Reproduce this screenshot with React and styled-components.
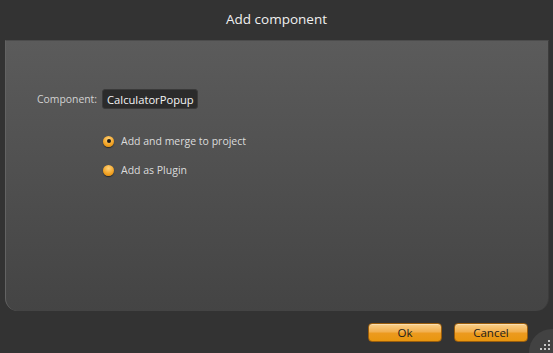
import React, { useState } from "react";
import styled, { createGlobalStyle } from "styled-components";

const GlobalStyle = createGlobalStyle`
  html, body {
    margin: 0;
    padding: 0;
    background: #333333;
  }
  body {
    font-family: 'Open Sans', 'Noto Sans', sans-serif;
  }
`;

const Window = styled.div`
  position: relative;
  width: 553px;
  height: 353px;
  display: flex;
  flex-direction: column;
  background: #333333;
  overflow: hidden;
`;

const TitleBar = styled.div`
  height: 40px;
  display: flex;
  align-items: center;
  justify-content: center;
  color: #f0f0f0;
  font-size: 13.5px;
  padding-bottom: 3px;
  box-sizing: border-box;
`;

const Panel = styled.div`
  margin: 0 4px 0 5px;
  height: 271px;
  box-sizing: border-box;
  background: linear-gradient(#5b5b5b, #444444);
  border-top: 1px solid #4c4c4c;
  border-left: 1px solid #636363;
  border-right: 1px solid #3c3c3c;
  border-radius: 0 0 13px 13px;
  padding: 48px 0 0 31px;
  display: flex;
  flex-direction: column;
`;

const FieldRow = styled.div`
  display: flex;
  align-items: center;
  gap: 5px;
`;

const Label = styled.span`
  color: #d2d2d2;
  font-size: 10.4px;
`;

const NameBox = styled.div`
  height: 20px;
  box-sizing: border-box;
  padding: 0 3px 0 4px;
  display: flex;
  align-items: center;
  background: #2b2b2b;
  border: 1px solid #3a3a3a;
  border-radius: 3px;
  color: #f4f4f4;
  font-size: 11.2px;
`;

const Options = styled.div`
  display: flex;
  flex-direction: column;
  gap: 13px;
  margin: 24px 0 0 66px;
`;

const Option = styled.label`
  display: flex;
  align-items: center;
  gap: 7px;
  color: #dcdcdc;
  font-size: 10.5px;
  height: 16px;
  cursor: pointer;
`;

const Radio = styled.span`
  width: 11px;
  height: 11px;
  border-radius: 50%;
  box-sizing: border-box;
  background: radial-gradient(circle at 50% 30%, #ffd27a 0%, #f3a62a 55%, #d98200 100%);
  box-shadow: 0 1px 1px rgba(0, 0, 0, 0.5);
  display: flex;
  align-items: center;
  justify-content: center;

  &::after {
    content: "";
    width: 4px;
    height: 4px;
    border-radius: 50%;
    background: #1a1a1a;
    display: ${(p) => (p.checked ? "block" : "none")};
  }
`;

const Footer = styled.div`
  flex: 1;
  display: flex;
  justify-content: flex-end;
  align-items: flex-start;
  gap: 12px;
  padding: 12px 25px 0 0;
`;

const Button = styled.button`
  width: 74px;
  height: 19px;
  padding: 0;
  border: 1px solid #9a5d0c;
  border-radius: 4px;
  background: linear-gradient(#f9d08a 0%, #f2b050 45%, #ec9a1e 55%, #e8960f 100%);
  color: #1c1c1c;
  font-family: 'Open Sans', 'Noto Sans', sans-serif;
  font-size: 11.5px;
  line-height: 17px;
  box-shadow: inset 0 1px 0 rgba(255, 255, 255, 0.35);
  cursor: pointer;
`;

const Grip = styled.div`
  position: absolute;
  right: -22px;
  bottom: -22px;
  width: 46px;
  height: 46px;
  border-radius: 50%;
  background: #424242;
`;

const GripDots = styled.svg`
  position: absolute;
  right: 2px;
  bottom: 2px;
`;

const options = ["Add and merge to project", "Add as Plugin"];

export default function App() {
  const [choice, setChoice] = useState(0);
  return (
    <>
      <GlobalStyle />
      <Window>
        <TitleBar>Add component</TitleBar>
        <Panel>
          <FieldRow>
            <Label>Component:</Label>
            <NameBox>CalculatorPopup</NameBox>
          </FieldRow>
          <Options>
            {options.map((o, i) => (
              <Option key={o} onClick={() => setChoice(i)}>
                <Radio checked={choice === i} />
                {o}
              </Option>
            ))}
          </Options>
        </Panel>
        <Footer>
          <Button>Ok</Button>
          <Button>Cancel</Button>
        </Footer>
        <Grip />
        <GripDots width="11" height="11" viewBox="0 0 11 11">
          {[
            [8, 0], [4, 4], [8, 4], [0, 8], [4, 8], [8, 8],
          ].map(([x, y]) => (
            <rect key={`${x}-${y}`} x={x} y={y} width="2" height="2" fill="#c8c8c8" />
          ))}
        </GripDots>
      </Window>
    </>
  );
}
